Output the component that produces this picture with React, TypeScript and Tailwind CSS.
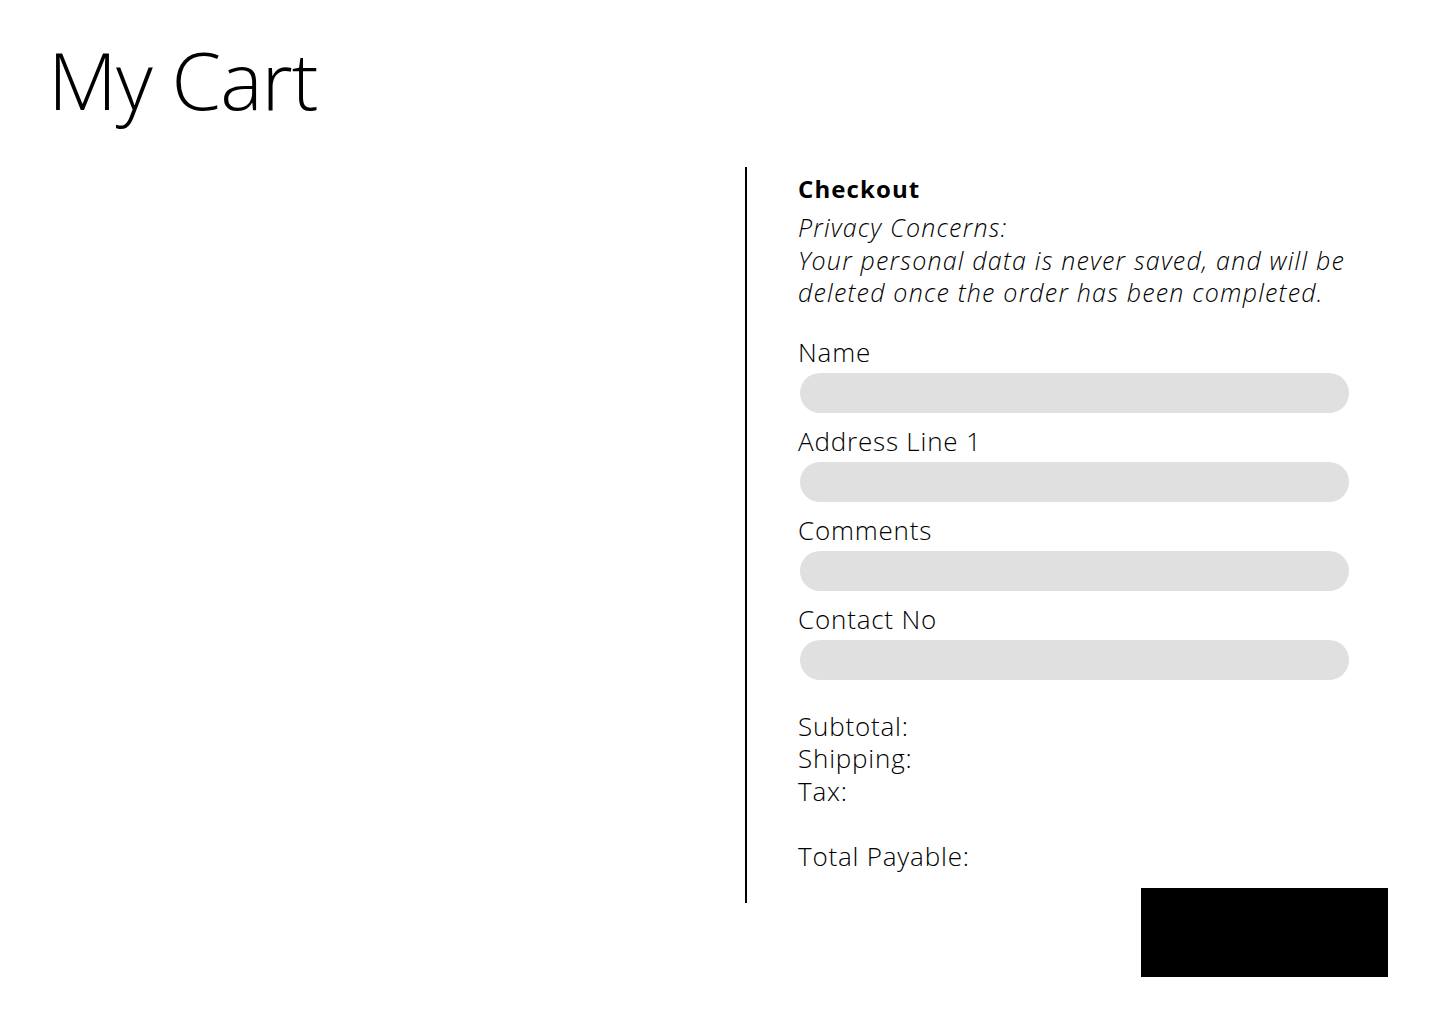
export default function App() {
  const fields = ["Name", "Address Line 1", "Comments", "Contact No"];
  return (
    <div className="min-h-[1024px] w-[1440px] bg-white text-black" style={{ fontFamily: "'Open Sans', Lato, sans-serif" }}>
      <h1 className="pl-[48px] pt-[31px] text-[80px] leading-[96px] font-light tracking-[-1px]">My Cart</h1>
      <div className="mt-[40px] flex">
        <div className="w-[745px]" />
        <div className="flex flex-col">
          <div className="w-[643px] border-l-2 border-black pl-[51px] pt-[6px] pb-[31px]">
            <h2 className="text-[24px] font-bold leading-[32px] tracking-[1.1px]">Checkout</h2>
            <p className="mt-[6px] w-[575px] text-[25px] font-light italic leading-[32.5px] tracking-[1.2px]">
              Privacy Concerns:
              <br />
              Your personal data is never saved, and will be deleted once the order has been completed.
            </p>
            <div className="mt-[28px] flex w-[551px] flex-col gap-[13px]">
              {fields.map((f) => (
                <div key={f} className="flex flex-col gap-[5px]">
                  <label className="text-[26px] font-light leading-[31px] tracking-[0.8px]">{f}</label>
                  <input className="h-[40px] w-[549px] ml-[2px] rounded-full bg-[#e0e0e0] outline-none" />
                </div>
              ))}
            </div>
            <div className="mt-[30px] text-[26px] font-light leading-[32.5px] tracking-[0.8px]">
              <div>Subtotal:</div>
              <div>Shipping:</div>
              <div>Tax:</div>
              <div>&nbsp;</div>
              <div>Total Payable:</div>
            </div>
          </div>
          <button className="-mt-[15px] ml-[396px] h-[89px] w-[247px] bg-black" />
        </div>
      </div>
    </div>
  );
}
